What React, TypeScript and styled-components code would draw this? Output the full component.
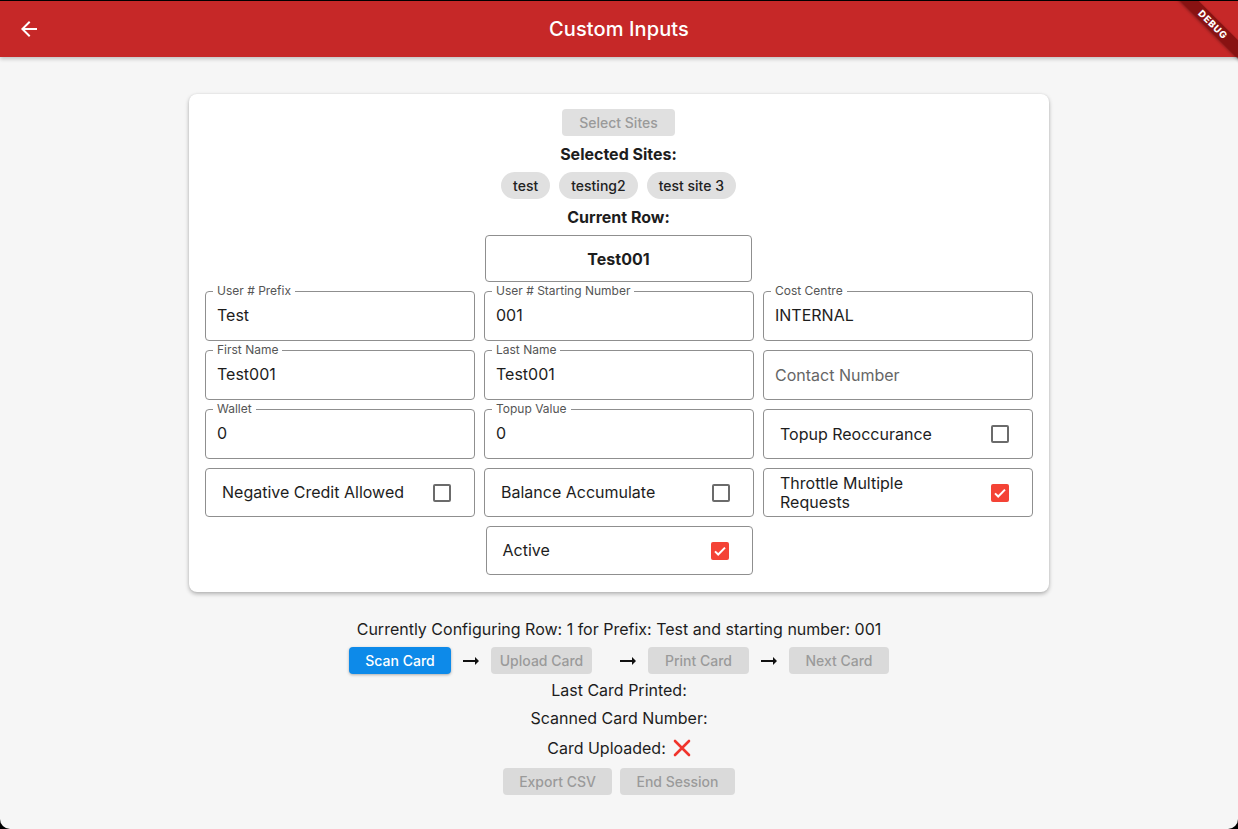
import React from 'react';
import styled, { createGlobalStyle } from 'styled-components';

const Global = createGlobalStyle`
  html, body { margin: 0; padding: 0; background: #000; }
  body { font-family: Inter, "Noto Sans", sans-serif; color: #1d1d1d; -webkit-font-smoothing: antialiased; }
  * { box-sizing: border-box; }
`;

const Window = styled.div`
  position: relative;
  width: 1238px;
  height: 829px;
  padding-top: 1px;
  background: #000;
  overflow: hidden;
`;

const Frame = styled.div`
  position: relative;
  height: 828px;
  background: #f6f6f6;
  border-radius: 0 0 10px 10px;
  overflow: hidden;
  display: flex;
  flex-direction: column;
`;

const AppBar = styled.header`
  position: relative;
  z-index: 2;
  height: 56px;
  flex: none;
  background: #c62828;
  display: grid;
  grid-template-columns: 56px 1fr 56px;
  align-items: center;
  box-shadow: 0 2px 4px rgba(0, 0, 0, 0.22);
`;

const BackButton = styled.button`
  border: 0;
  background: transparent;
  padding: 0;
  margin-left: 17px;
  width: 24px;
  height: 24px;
  display: flex;
  align-items: center;
  justify-content: center;
  cursor: pointer;
`;

const Title = styled.h1`
  margin: 0;
  text-align: center;
  color: #fff;
  font-size: 20px;
  font-weight: 500;
  letter-spacing: 0.1px;
`;

const DebugBanner = styled.div`
  position: absolute;
  z-index: 5;
  top: 17px;
  left: 1153px;
  width: 120px;
  height: 13px;
  transform: rotate(45deg);
  background: rgba(120, 12, 12, 0.8);
  box-shadow: 0 1px 3px rgba(0, 0, 0, 0.35);
  color: #fff;
  font-size: 9.5px;
  font-weight: 800;
  line-height: 13px;
  text-align: center;
  letter-spacing: 0.7px;
`;

const Body = styled.main`
  flex: 1;
  display: flex;
  flex-direction: column;
  align-items: center;
  padding-top: 37px;
`;

const Card = styled.section`
  width: 860px;
  background: #fff;
  border-radius: 8px;
  box-shadow: 0 2px 4px rgba(0, 0, 0, 0.28), 0 0 2px rgba(0, 0, 0, 0.08);
  padding: 15px 17px 17px 16px;
  display: flex;
  flex-direction: column;
  align-items: center;
  gap: 9px;
`;

const FlatButton = styled.button<{ $primary?: boolean; $w: number; $onCard?: boolean }>`
  width: ${p => p.$w}px;
  height: 27px;
  flex: none;
  border: 0;
  border-radius: 4px;
  font-family: inherit;
  font-size: 14px;
  font-weight: 500;
  padding: 0;
  background: ${p => (p.$primary ? '#0d8ae9' : p.$onCard ? '#e0e0e0' : '#dadada')};
  color: ${p => (p.$primary ? '#fff' : '#9a9a9a')};
  box-shadow: ${p => (p.$primary ? '0 1px 3px rgba(0,0,0,0.3)' : 'none')};
`;

const Heading = styled.div`
  font-size: 16px;
  font-weight: 700;
  line-height: 18px;
  color: #1d1d1d;
`;

const ChipRow = styled.div`
  display: flex;
  gap: 9px;
`;

const Chip = styled.span`
  display: inline-flex;
  align-items: center;
  height: 27px;
  padding: 0 12px;
  border-radius: 14px;
  background: #e0e0e0;
  font-size: 14px;
  font-weight: 500;
  color: #222;
`;

const RowBox = styled.div`
  width: 267px;
  height: 47px;
  border: 1px solid #8f8f8f;
  border-radius: 4px;
  display: flex;
  align-items: center;
  justify-content: center;
  font-size: 16px;
  font-weight: 700;
`;

const Grid = styled.div`
  display: grid;
  grid-template-columns: repeat(3, 270px);
  grid-template-rows: 50px 50px 50px 49px 49px;
  gap: 9px;
  align-self: stretch;
`;

const Field = styled.div`
  position: relative;
  border: 1px solid #8f8f8f;
  border-radius: 4px;
  display: flex;
  align-items: center;
  padding: 0 11px;
  font-size: 16px;
`;

const FieldLabel = styled.span`
  position: absolute;
  top: -8px;
  left: 7px;
  padding: 0 4px;
  background: #fff;
  font-size: 12px;
  line-height: 14px;
  color: #555;
`;

const Value = styled.span<{ $placeholder?: boolean }>`
  color: ${p => (p.$placeholder ? '#666' : '#1d1d1d')};
  margin-top: ${p => (p.$placeholder ? '0' : '-2px')};
`;

const CheckTile = styled.div<{ $center?: boolean }>`
  border: 1px solid #8f8f8f;
  border-radius: 4px;
  display: flex;
  align-items: center;
  gap: 16px;
  padding: 0 23px 0 16px;
  font-size: 16px;
  line-height: 19px;
  ${p => (p.$center ? 'grid-column: 2; justify-self: center; width: 267px;' : '')}
`;

const TileText = styled.span`
  flex: 1;
`;

const Box = styled.span<{ $checked?: boolean }>`
  width: 18px;
  height: 18px;
  flex: none;
  border-radius: 2px;
  border: ${p => (p.$checked ? '0' : '2px solid #6b6b6b')};
  background: ${p => (p.$checked ? '#f44336' : 'transparent')};
  display: flex;
  align-items: center;
  justify-content: center;
`;

const Status = styled.div`
  margin-top: 27px;
  display: flex;
  flex-direction: column;
  align-items: center;
`;

const Line = styled.div<{ $mt?: number }>`
  font-size: 16px;
  line-height: 20px;
  margin-top: ${p => p.$mt ?? 0}px;
  display: flex;
  align-items: center;
  gap: 7px;
`;

const Steps = styled.div`
  display: flex;
  align-items: center;
  margin-top: 8px;
`;

const Arrow = styled.span<{ $ml: number; $mr: number }>`
  display: flex;
  margin: 0 ${p => p.$mr}px 0 ${p => p.$ml}px;
`;

const Actions = styled.div`
  display: flex;
  gap: 8px;
  margin-top: 10px;
`;

const ArrowIcon = () => (
  <svg width="24" height="24" viewBox="0 0 24 24">
    <path d="M16.01 11H4v2h12.01v3L20 12l-3.99-4z" fill="#111" />
  </svg>
);

const Check = () => (
  <svg width="16" height="16" viewBox="0 0 24 24">
    <path d="M4.5 12.5l4.8 4.8L19.5 7" fill="none" stroke="#fff" strokeWidth="3" />
  </svg>
);

const fields = [
  { label: 'User # Prefix', value: 'Test' },
  { label: 'User # Starting Number', value: '001' },
  { label: 'Cost Centre', value: 'INTERNAL' },
  { label: 'First Name', value: 'Test001' },
  { label: 'Last Name', value: 'Test001' },
  { label: '', value: 'Contact Number' },
  { label: 'Wallet', value: '0' },
  { label: 'Topup Value', value: '0' },
];

export default function App() {
  return (
    <Window>
      <Global />
      <Frame>
        <AppBar>
          <BackButton aria-label="Back">
            <svg width="24" height="24" viewBox="0 0 24 24">
              <path d="M20 11H7.83l5.59-5.59L12 4l-8 8 8 8 1.41-1.41L7.83 13H20v-2z" fill="#fff" />
            </svg>
          </BackButton>
          <Title>Custom Inputs</Title>
          <span />
        </AppBar>
        <DebugBanner>DEBUG</DebugBanner>
        <Body>
          <Card>
            <FlatButton $w={113} $onCard>Select Sites</FlatButton>
            <Heading>Selected Sites:</Heading>
            <ChipRow>
              <Chip>test</Chip>
              <Chip>testing2</Chip>
              <Chip>test site 3</Chip>
            </ChipRow>
            <Heading>Current Row:</Heading>
            <RowBox>Test001</RowBox>
            <Grid>
              {fields.map(f => (
                <Field key={f.label + f.value}>
                  {f.label && <FieldLabel>{f.label}</FieldLabel>}
                  <Value $placeholder={!f.label}>{f.value}</Value>
                </Field>
              ))}
              <CheckTile>
                <TileText>Topup Reoccurance</TileText>
                <Box />
              </CheckTile>
              <CheckTile>
                <TileText>Negative Credit Allowed</TileText>
                <Box />
              </CheckTile>
              <CheckTile>
                <TileText>Balance Accumulate</TileText>
                <Box />
              </CheckTile>
              <CheckTile>
                <TileText>Throttle Multiple Requests</TileText>
                <Box $checked><Check /></Box>
              </CheckTile>
              <CheckTile $center>
                <TileText>Active</TileText>
                <Box $checked><Check /></Box>
              </CheckTile>
            </Grid>
          </Card>
          <Status>
            <Line>Currently Configuring Row: 1 for Prefix: Test and starting number: 001</Line>
            <Steps>
              <FlatButton $w={102} $primary>Scan Card</FlatButton>
              <Arrow $ml={8} $mr={8}><ArrowIcon /></Arrow>
              <FlatButton $w={101}>Upload Card</FlatButton>
              <Arrow $ml={24} $mr={8}><ArrowIcon /></Arrow>
              <FlatButton $w={101}>Print Card</FlatButton>
              <Arrow $ml={8} $mr={8}><ArrowIcon /></Arrow>
              <FlatButton $w={100}>Next Card</FlatButton>
            </Steps>
            <Line $mt={6}>Last Card Printed:</Line>
            <Line $mt={8}>Scanned Card Number:</Line>
            <Line $mt={10}>
              Card Uploaded:
              <svg width="18" height="18" viewBox="0 0 18 18">
                <path d="M2 2L16 16M16 2L2 16" stroke="#f0342c" strokeWidth="2.6" strokeLinecap="round" />
              </svg>
            </Line>
            <Actions>
              <FlatButton $w={109}>Export CSV</FlatButton>
              <FlatButton $w={115}>End Session</FlatButton>
            </Actions>
          </Status>
        </Body>
      </Frame>
    </Window>
  );
}
